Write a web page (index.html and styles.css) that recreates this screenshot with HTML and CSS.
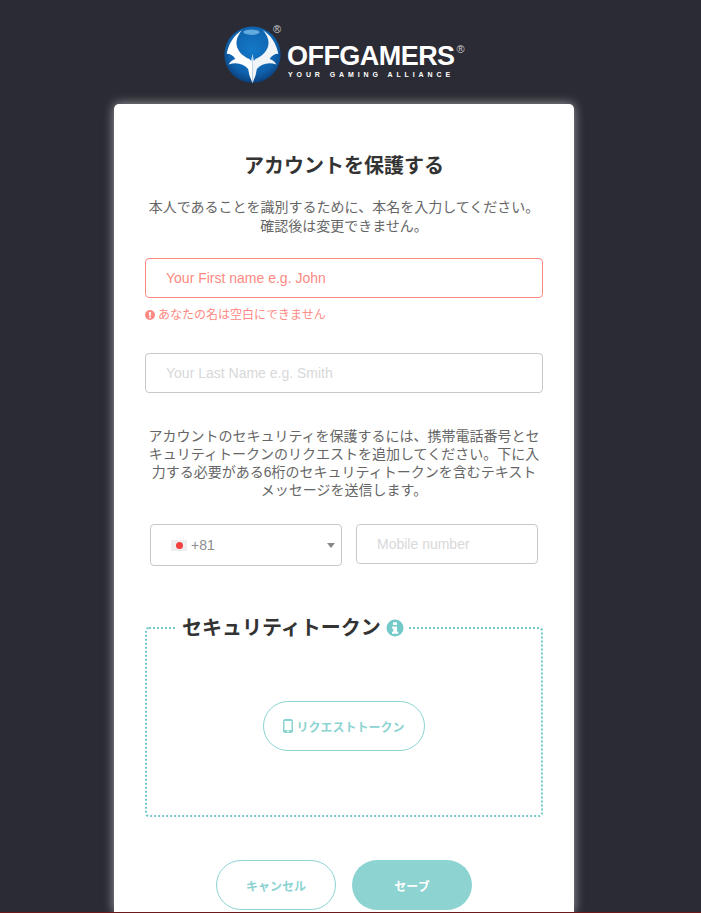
FILE: index.html
```html
<!DOCTYPE html>
<html lang="ja">
<head>
  <meta charset="UTF-8" />
  <title>アカウントを保護する</title>
  <link rel="stylesheet" href="styles.css">
</head>
<body>
  <header class="logo">
    <div class="globe">
      <svg width="57" height="58" viewBox="12 18 170 172">
        <defs>
          <radialGradient id="ball" cx="50%" cy="42%" r="60%">
            <stop offset="0" stop-color="#1479c8" />
            <stop offset="0.7" stop-color="#0f62ad" />
            <stop offset="1" stop-color="#0a3d78" />
          </radialGradient>
          <path id="wing" d="M66 30 C42 44 26 70 20 100 C32 100 40 106 46 116 C38 118 30 124 26 132 C50 124 70 130 84 146 L88 165 L97 188 L97 100 L93 122 L88 116 C55 102 32 68 66 30 Z" />
        </defs>
        <circle cx="97" cy="103" r="84" fill="url(#ball)" />
        <ellipse cx="94" cy="36" rx="24" ry="8" fill="#7fc0ee" opacity="0.75" />
        <use href="#wing" fill="#fff" />
        <use href="#wing" fill="#f2f5f8" transform="translate(194 0) scale(-1 1)" />
      </svg>
      <span class="reg reg-globe">®</span>
    </div>
    <div class="brand">
      <div class="brand-name">OFFGAMERS<span class="reg reg-name">®</span></div>
      <div class="brand-tag">YOUR GAMING ALLIANCE</div>
    </div>
  </header>

  <main class="card">
    <h1>アカウントを保護する</h1>
    <p class="intro">本人であることを識別するために、本名を入力してください。<br>確認後は変更できません。</p>

    <div class="field field-error"><input type="text" placeholder="Your First name e.g. John"></div>
    <div class="error-msg">
      <svg width="10" height="10" viewBox="0 0 10 10"><circle cx="5" cy="5" r="5" fill="#fd8a82" /><rect x="4.1" y="2" width="1.8" height="3.8" fill="#fff" /><rect x="4.1" y="6.6" width="1.8" height="1.6" fill="#fff" /></svg>
      あなたの名は空白にできません
    </div>
    <div class="field field-last"><input type="text" placeholder="Your Last Name e.g. Smith"></div>

    <p class="desc">アカウントのセキュリティを保護するには、携帯電話番号とセキュリティトークンのリクエストを追加してください。下に入力する必要がある6桁のセキュリティトークンを含むテキストメッセージを送信します。</p>

    <div class="phone-row">
      <div class="country">
        <span class="flag"><i></i></span>
        <span>+81</span>
        <span class="caret"></span>
      </div>
      <input class="mobile" type="text" placeholder="Mobile number">
    </div>

    <fieldset class="token">
      <legend>セキュリティトークン
        <svg width="18" height="18" viewBox="0 0 18 18"><circle cx="9" cy="9" r="8.5" fill="#74c9c9" /><rect x="7" y="3.2" width="4" height="2.8" rx="0.6" fill="#fff" /><path fill="#fff" d="M6 7.4h5v5.4h1.2v2H6v-2h1.2V9.4H6z" /></svg>
      </legend>
      <button class="btn btn-token" type="button">
        <svg width="10" height="14" viewBox="0 0 10 14"><rect width="10" height="14" rx="2" fill="#8cd3d2" /><rect x="1.5" y="2" width="7" height="9" fill="#fff" /><rect x="4" y="11.8" width="2" height="1.2" fill="#fff" /></svg>リクエストトークン
      </button>
    </fieldset>

    <div class="actions">
      <button class="btn btn-outline" type="button">キャンセル</button>
      <button class="btn btn-fill" type="button">セーブ</button>
    </div>
  </main>
  <div class="bottom-line"></div>
</body>
</html>
```

FILE: styles.css
```css
html, body { height: 913px; overflow: hidden; }
body {
  margin: 0; padding-right: 13px; background: #2b2b35; position: relative;
  font-family: "Liberation Sans", "Noto Sans CJK JP", sans-serif;
  color: #5f5f5f;
}

.logo {
  display: flex; justify-content: center; align-items: flex-start; gap: 6px;
  height: 104px; box-sizing: border-box; padding-top: 26px;
}
.globe { position: relative; width: 57px; height: 58px; }
.reg { color: #ccc; font-weight: normal; letter-spacing: 0; }
.reg-globe { position: absolute; left: 49px; top: -3px; font-size: 11px; line-height: 12px; }
.reg-name { font-size: 11px; line-height: 12px; vertical-align: 12px; margin-left: 2px; }
.brand { width: 177px; margin-top: 17px; color: #fff; }
.brand-name { font-size: 27px; font-weight: bold; letter-spacing: -0.55px; line-height: 26px; white-space: nowrap; }
.brand-tag { margin-top: 1px; padding-left: 1px; font-size: 7px; font-weight: bold; letter-spacing: 3.9px; line-height: 9px; white-space: nowrap; }

.card {
  width: 460px; height: 809px; margin: 0 auto; box-sizing: border-box;
  background: #fff; border-radius: 5px 5px 0 0; padding: 49px 31px 0;
  box-shadow: 0 0 11px rgba(255, 255, 255, 0.55);
  text-align: center;
}
h1 { margin: 0; font-size: 20px; line-height: 26px; font-weight: bold; color: #333; }
.intro { margin: 19px 0 0; font-size: 14px; line-height: 19px; color: #666; }

input {
  display: block; box-sizing: border-box; width: 100%; height: 40px;
  border: 1px solid #c8c8c8; border-radius: 4px; background: #fff;
  padding: 0 20px; font: 14px "Liberation Sans", "Noto Sans CJK JP", sans-serif; outline: none;
}
input::placeholder { color: #d8d8da; opacity: 1; }

.field-error { margin-top: 22px; }
.field-error input { border-color: #fd8a82; }
.field-error input::placeholder { color: #fd8a82; }
.error-msg {
  display: flex; align-items: center; gap: 3px; margin-top: 8px;
  font-size: 12px; line-height: 18px; color: #fd8a82; text-align: left;
}
.field-last { margin-top: 29px; }

.desc { margin: 34px 0 0; font-size: 14px; line-height: 18px; color: #666; }

.phone-row { display: flex; align-items: flex-start; gap: 14px; margin: 25px 5px 0; }
.country {
  flex: 0 0 192px; box-sizing: border-box; height: 42px; padding-left: 20px;
  display: flex; align-items: center; gap: 4px;
  border: 1px solid #c8c8c8; border-radius: 4px;
  font-size: 14px; color: #8c8c8c; position: relative;
}
.flag {
  width: 16px; height: 11px; background: #eee; display: flex;
  align-items: center; justify-content: center;
}
.flag i { width: 7px; height: 7px; border-radius: 50%; background: #f44040; }
.caret {
  position: absolute; right: 6px; top: 18px;
  border: 4px solid transparent; border-top: 5px solid #888; border-bottom: 0;
}
.mobile { flex: 1; width: auto; min-width: 0; }

.token {
  margin: 49px 0 0; padding: 0; height: 202px; box-sizing: border-box;
  border: 2px dotted #74c9c9; border-radius: 4px;
  min-width: 0;
}
.token legend {
  margin: 0 auto 0 28px; padding: 0 4px 0 7px; font-size: 20px; line-height: 26px; font-weight: bold; color: #333;
  display: flex; align-items: center; gap: 5px; text-align: left;
}
.btn {
  font: bold 12px "Liberation Sans", "Noto Sans CJK JP", sans-serif;
  border-radius: 25px; cursor: pointer; height: 50px; box-sizing: border-box;
}
.btn-token {
  display: flex; align-items: center; justify-content: center; gap: 3px;
  width: 162px; margin: 60px auto 0; background: #fff; color: #8cd3d2;
  border: 1px solid #8cd3d2;
}
.actions { display: flex; justify-content: center; gap: 16px; margin-top: 43px; }
.btn-outline { width: 120px; background: #fff; color: #8cd3d2; border: 1px solid #8cd3d2; }
.btn-fill { width: 120px; background: #8cd3d2; color: #fff; border: 0; }

.bottom-line { position: absolute; left: 0; right: 0; bottom: 0; height: 1px; background: #6b1a1a; }
```
